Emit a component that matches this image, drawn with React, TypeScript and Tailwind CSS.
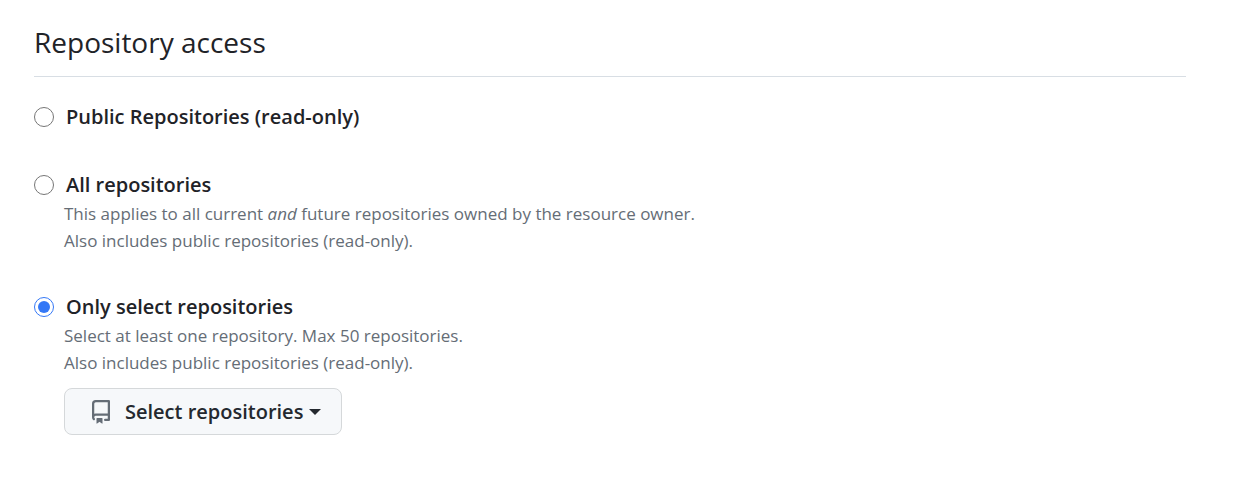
import type { ReactNode } from "react";

type OptionProps = { id: string; label: string; checked?: boolean; children?: ReactNode };

function RepoIcon() {
  return (
    <svg viewBox="0 0 16 16" aria-hidden="true" className="mr-3 size-6 fill-[#656d76]">
      <path d="M2 2.5A2.5 2.5 0 0 1 4.5 0h8.75a.75.75 0 0 1 .75.75v12.5a.75.75 0 0 1-.75.75h-2.5a.75.75 0 0 1 0-1.5h1.75v-2h-8a1 1 0 0 0-.714 1.7.75.75 0 1 1-1.072 1.05A2.495 2.495 0 0 1 2 11.5Zm10.5-1h-8a1 1 0 0 0-1 1v6.708A2.486 2.486 0 0 1 4.5 9h8ZM5 12.25a.25.25 0 0 1 .25-.25h3.5a.25.25 0 0 1 .25.25v3.25a.25.25 0 0 1-.4.2l-1.45-1.087a.249.249 0 0 0-.3 0L5.4 15.7a.25.25 0 0 1-.4-.2Z" />
    </svg>
  );
}

function Option({ id, label, checked, children }: OptionProps) {
  return (
    <div className="grid grid-cols-[30px_1fr] items-center">
      <input type="radio" name="access" id={id} defaultChecked={checked} className="size-5 accent-[#3478f6]" />
      <label htmlFor={id} className="pl-0.5 text-[20px] leading-[30px] font-semibold text-[#1f2328]">
        {label}
      </label>
      <div className="col-start-2">{children}</div>
    </div>
  );
}

export default function App() {
  return (
    <main className="min-h-screen bg-white pt-[22px] pr-[60px] pl-[34px] font-['Open_Sans',sans-serif]">
      <h2 className="border-b border-[#d8dee4] pb-3.5 text-[28px] leading-10 text-[#1f2328]">Repository access</h2>
      <form className="mt-[25px] flex flex-col gap-[38px]">
        <Option id="public" label="Public Repositories (read-only)" />
        <Option id="all" label="All repositories">
          <p className="text-[17px] leading-[27px] text-[#656d76]">
            This applies to all current <em>and</em> future repositories owned by the resource owner.
            <br />
            Also includes public repositories (read-only).
          </p>
        </Option>
        <Option id="select" label="Only select repositories" checked>
          <p className="text-[17px] leading-[27px] text-[#656d76]">
            Select at least one repository. Max 50 repositories.
            <br />
            Also includes public repositories (read-only).
          </p>
          <button
            type="button"
            className="mt-3 flex h-[47px] items-center rounded-lg border border-[#d5d8da] bg-[#f6f8fa] pr-5 pl-6 text-[20px] font-semibold text-[#24292f]"
          >
            <RepoIcon />
            Select repositories
            <span className="ml-1.5 border-x-[6px] border-t-[6px] border-x-transparent border-t-[#24292f]" />
          </button>
        </Option>
      </form>
    </main>
  );
}
